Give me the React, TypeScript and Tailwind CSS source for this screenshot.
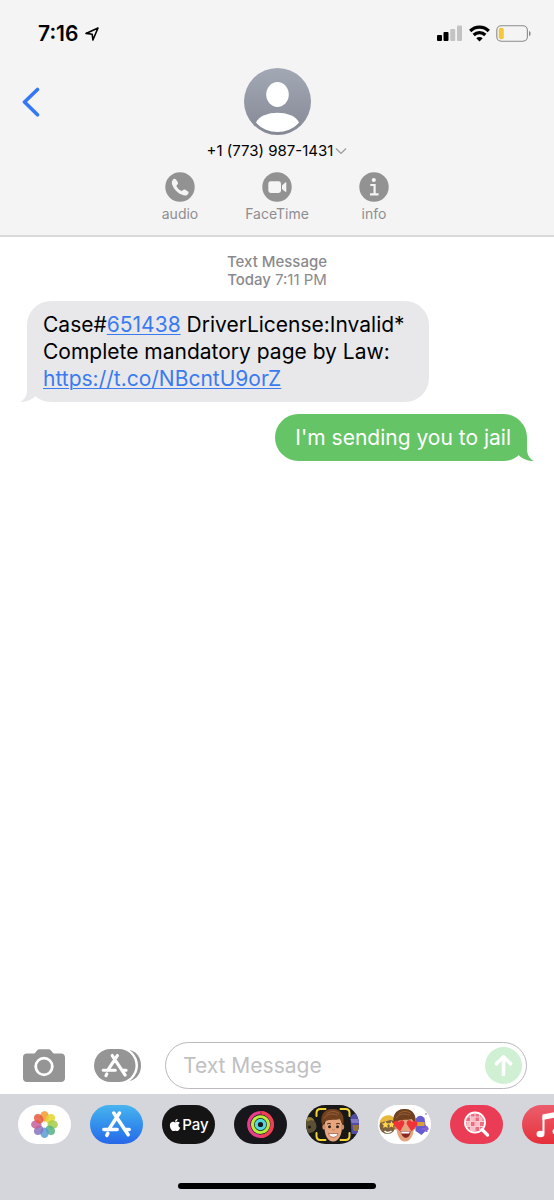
import type { ReactNode } from 'react'
import { FaApple } from 'react-icons/fa'

const petals = [
  { angle: 0, color: '#f39a2d' },
  { angle: 45, color: '#e3d52f' },
  { angle: 90, color: '#a5cc4a' },
  { angle: 135, color: '#55b184' },
  { angle: 180, color: '#5b9bd5' },
  { angle: 225, color: '#8274bd' },
  { angle: 270, color: '#c4629a' },
  { angle: 315, color: '#e8583f' },
]

function StatusBar() {
  return (
    <div className="flex h-17 items-center justify-between pr-[22px] pb-px pl-[38px]">
      <div className="flex items-center gap-[7px]">
        <span className="text-[21px] leading-6 font-semibold">7:16</span>
        <svg width="14" height="14" viewBox="0 0 14 14" fill="none" stroke="#000" strokeWidth="1.6" strokeLinejoin="round">
          <path d="M1 6.4 13 1 7.9 13 7.2 7.2Z" />
        </svg>
      </div>

      <div className="flex items-center gap-1.5">
        <svg width="26" height="17" viewBox="0 0 26 17">
          <rect x="0" y="10" width="5" height="6" rx="1" />
          <rect x="6.5" y="7" width="5" height="9" rx="1" />
          <rect x="13.2" y="4" width="5" height="12" rx="1" fill="#c3c3c4" />
          <rect x="20" y="0.5" width="5" height="15.5" rx="1" fill="#c3c3c4" />
        </svg>
        <svg width="21" height="17" viewBox="0 0 21 17" fill="none" stroke="#000" strokeWidth="3.2">
          <path d="M1.2 6a13.2 13.2 0 0 1 18.6 0" />
          <path d="M4.7 10a8.2 8.2 0 0 1 11.6 0" />
          <path d="M7.3 13.3a4.5 4.5 0 0 1 6.4 0L10.5 16.5Z" fill="#000" stroke="none" />
        </svg>
        <svg width="36" height="17" viewBox="0 0 36 17">
          <rect x="0.8" y="0.8" width="30.6" height="15.4" rx="4.4" fill="none" stroke="#8b8b8d" strokeWidth="1.1" />
          <rect x="2.8" y="2.8" width="5" height="11.4" rx="2" fill="#f5c83b" />
          <path d="M33 6v5.2c2.2-.8 2.2-4.4 0-5.2Z" fill="#8b8b8d" />
        </svg>
      </div>
    </div>
  )
}

function Action({ label, children }: { label: string; children: ReactNode }) {
  return (
    <button type="button" className="flex w-[97px] flex-col items-center gap-0.5 text-[#8e8e90]">
      <svg width="30" height="30" viewBox="0 0 30 30">
        <circle cx="15" cy="15" r="14.7" fill="#929293" />
        {children}
      </svg>
      <span className="text-[14px] leading-5">{label}</span>
    </button>
  )
}

function Header() {
  return (
    <header className="border-b-2 border-[#d9d9db] bg-[#f4f4f5] pb-[11px]">
      <StatusBar />
      <div className="grid grid-cols-[1fr_auto_1fr] items-center">
        <button type="button" aria-label="Back" className="w-fit pl-[22px]">
          <svg width="18" height="30" viewBox="0 0 18 30" fill="none" stroke="#3478f6" strokeWidth="3.6" strokeLinecap="round" strokeLinejoin="round">
            <path d="M15.5 2.5 2.5 15 15.5 27.8" />
          </svg>
        </button>
        <svg width="67" height="67" viewBox="0 0 67 67">
          <defs>
            <linearGradient id="avatar" x1="0" y1="0" x2="0" y2="1">
              <stop offset="0" stopColor="#a3a8b6" />
              <stop offset="1" stopColor="#858994" />
            </linearGradient>
            <clipPath id="avatar-clip">
              <circle cx="33.5" cy="33.5" r="30.5" />
            </clipPath>
          </defs>
          <circle cx="33.5" cy="33.5" r="33.5" fill="url(#avatar)" />
          <ellipse cx="33.5" cy="26.5" rx="11.3" ry="12.5" fill="#fff" />
          <path d="M12 54.5C15 48 24 44.7 33.5 44.7S52 48 55 54.5C50 62 42 64.5 33.5 64.5S17 62 12 54.5Z" fill="#fff" clipPath="url(#avatar-clip)" />
        </svg>
      </div>

      <button type="button" className="mx-auto mt-1.5 flex items-center gap-0.5 text-[15px] leading-5">
        +1 (773) 987-1431
        <svg width="12" height="8" viewBox="0 0 12 8" fill="none" stroke="#9a9a9e" strokeWidth="1.2" strokeLinecap="round">
          <path d="m1.2 1.8 4.8 4.6 4.8-4.6" />
        </svg>
      </button>

      <div className="mt-[11px] flex justify-center">
        <Action label="audio">
          <path
            d="M8.3 7.2c1-.8 2-.6 2.7.4l1.7 2.5c.6.9.5 1.6-.2 2.3l-.8.9c-.3.4-.3.7-.1 1.1 1 1.9 2.5 3.4 4.4 4.4.4.2.8.2 1.1-.1l1-.8c.7-.6 1.4-.7 2.2-.2l2.4 1.6c1 .7 1.2 1.6.4 2.6-1.3 1.7-3.3 2-5.4 1.2-5-1.9-8.700-5.600-10.500-10.400-.8-2.200-.4-4.100 1.100-5.500Z"
            fill="#f4f4f5"
          />
        </Action>
        <Action label="FaceTime">
          <rect x="6.3" y="9.3" width="12.7" height="11.7" rx="2.4" fill="#f4f4f5" />
          <path d="m20 13.4 3.3-2.9c.5-.4 1-.2 1 .5v8.2c0 .7-.5.9-1 .5L20 16.9Z" fill="#f4f4f5" />
        </Action>
        <Action label="info">
          <circle cx="14.8" cy="8" r="2.1" fill="#f4f4f5" />
          <path d="M11.3 13h4.3v9M11 22.3h8.6" fill="none" stroke="#f4f4f5" strokeWidth="2.2" />
        </Action>
      </div>
    </header>
  )
}

function Messages() {
  return (
    <main className="flex flex-1 flex-col px-[27px] pt-4">
      <p className="text-center text-[15px] leading-[18px] font-medium text-[#8a8a8e]">
        Text Message
        <br />
        Today <span className="font-normal">7:11 PM</span>
      </p>

      <div className="relative mt-3 max-w-[84%] self-start rounded-3xl bg-[#e8e8ea] py-2.5 pr-6 pl-4 text-[21px] leading-[27px]">
        <p>
          Case#
          <a href="#case" className="text-[#3a7bf0] underline decoration-1 underline-offset-2">
            651438
          </a>{' '}
          DriverLicense:Invalid*
        </p>
        <p>Complete mandatory page by Law:</p>
        <a href="#link" className="block w-fit text-[#3a7bf0] underline decoration-1 underline-offset-2">
          https://t.co/NBcntU9orZ
        </a>
        <svg className="absolute bottom-0 -left-[7px]" width="24" height="24" viewBox="0 0 24 24">
          <path d="M7 0V12C7 17.5 4.5 22 0 24 6 24 11.5 22 15 18.5L20 12Z" fill="#e8e8ea" />
        </svg>
      </div>

      <div className="relative mt-3 self-end rounded-3xl bg-[#65c466] py-2.5 pr-4 pl-5 text-[21px] leading-[27px] text-white">
        <p>I'm sending you to jail</p>
        <svg className="absolute -right-[7px] bottom-0" width="24" height="24" viewBox="0 0 24 24">
          <path d="M17 0V12C17 17.5 19.5 22 24 24 18 24 12.5 22 9 18.5L4 12Z" fill="#65c466" />
        </svg>
      </div>
    </main>
  )
}

function StoreGlyph() {
  return (
    <path
      d="M16.5.8 5.8 17.2M10.8.8 25.2 22.5M.8 17.2h13.4M21.5 17.2h4.7M4.8 21.2l-1 2"
      stroke="#fff"
      strokeWidth="3.5"
      strokeLinecap="round"
      fill="none"
    />
  )
}

function Composer() {
  return (
    <form className="flex items-center py-[5px] pr-[27px] pl-[23px]" onSubmit={(e) => e.preventDefault()}>
      <button type="button" aria-label="Camera">
        <svg width="42" height="33" viewBox="0 0 42 33">
          <path d="M4 4.6h7.5L14.3 1.3C15 .5 15.7.2 16.7.2h8.6c1 0 1.7.3 2.4 1.1l2.8 3.300H38c2.500 0 4 1.500 4 4V29c0 2.500-1.500 4-4 4H4c-2.500 0-4-1.500-4-4V8.600c0-2.500 1.500-4 4-4Z" fill="#959596" />
          <circle cx="21" cy="17.5" r="8.3" fill="none" stroke="#fff" strokeWidth="2.8" />
        </svg>
      </button>
      <button type="button" aria-label="Apps" className="ml-[29px]">
        <svg width="47" height="33" viewBox="0 0 47 33">
          <path d="M36 1C43 3 47 9 47 16.5S43 30 36 32Z" fill="#959596" />
          <rect x="-2" y="-2" width="46" height="37" rx="18.5" fill="#fff" />
          <rect width="41.5" height="33" rx="16.5" fill="#959596" />
          <g transform="translate(8.5 5.8) scale(.9)">
            <StoreGlyph />
          </g>
        </svg>
      </button>
      <div className="ml-6 flex h-[47px] min-w-0 flex-1 items-center rounded-full border border-[#b9b9bd] pr-1 pl-[17px]">
        <input
          type="text"
          aria-label="Message"
          placeholder="Text Message"
          className="min-w-0 flex-1 bg-transparent text-[21px] leading-[27px] outline-none placeholder:text-[#c0c0c3]"
        />
        <button type="submit" aria-label="Send">
          <svg width="37" height="37" viewBox="0 0 37 37">
            <circle cx="18.5" cy="18.5" r="18.5" fill="#d0f0d3" />
            <path d="M18.5 27.5V10.5M11.5 16.8l7-7 7 7" fill="none" stroke="#fff" strokeWidth="3.5" strokeLinecap="round" strokeLinejoin="round" />
          </svg>
        </button>
      </div>
    </form>
  )
}

function Face() {
  return (
    <>
      <path d="M18 19C17.5 29 20.5 36.5 26.5 36.5S36 29 35.5 19L33 11H21Z" fill="#e5a67f" />
      <ellipse cx="17.5" cy="22" rx="1.7" ry="2.8" fill="#d08d66" />
      <ellipse cx="36" cy="22" rx="1.7" ry="2.8" fill="#d08d66" />
      <path d="M16 20.5C12.5 12 17 3.5 26 4c8.5-.5 13 6.5 10.5 16.5-.8-3-2-5-3.500-6.500-4.500 1.500-10 0-13.500 2-1.500 1-2.500 2.500-3.500 4.500Z" fill="#70401f" />
      <path d="M17.5 13.5C20 9 25 8 31 10M20 9C23.5 6 28 5.5 32.5 8.5" fill="none" stroke="#99613a" strokeWidth="1" />
    </>
  )
}

function AppPill({ label, tone, children }: { label: string; tone: string; children: ReactNode }) {
  return (
    <button type="button" aria-label={label} className={`h-[39px] w-[53px] shrink-0 overflow-hidden rounded-full ${tone}`}>
      <svg className="size-full" viewBox="0 0 52 39">
        {children}
      </svg>
    </button>
  )
}

function AppStrip() {
  return (
    <footer className="overflow-hidden bg-[#d5d6dc] py-[11px]">
      <nav className="flex gap-[19px] pl-[18px]">
        <AppPill label="Photos" tone="bg-white">
          {petals.map((p) => (
            <ellipse
              key={p.angle}
              cx="26"
              cy="11.3"
              rx="4.3"
              ry="5.2"
              fill={p.color}
              fillOpacity="0.85"
              transform={`rotate(${p.angle} 26 19.5)`}
            />
          ))}
          <circle cx="26" cy="19.5" r="1.2" fill="#fff" />
        </AppPill>
        <AppPill label="App Store" tone="bg-linear-to-b from-[#48b4ee] to-[#2867e9]">
          <g transform="translate(12.5 7.2)">
            <StoreGlyph />
          </g>
        </AppPill>
        <button type="button" className="flex h-[39px] w-[53px] shrink-0 items-center justify-center rounded-full bg-[#151414] text-white">
          <FaApple className="size-3.5" />
          <span className="text-[15px] leading-5 font-medium">Pay</span>
        </button>
        <AppPill label="Fitness" tone="bg-[#17161b]">
          <g fill="none" strokeWidth="3.2">
            <circle cx="26" cy="19.5" r="11.8" stroke="#e93c8d" />
            <path d="M26 7.7a11.8 11.8 0 0 1 0 23.6" stroke="#ee4050" />
            <circle cx="26" cy="19.5" r="8" stroke="#b5ed3d" />
            <circle cx="26" cy="19.5" r="4.2" stroke="#55d5e0" />
            <path d="M26.5 6v4.5" stroke="#8f2634" strokeWidth="1" />
          </g>
        </AppPill>
        <AppPill label="Memoji" tone="bg-[#191818]">
          <circle cx="3" cy="21" r="7" fill="#5c5034" />
          <path d="M-3 17C0 10 6 11 8 16l-3-1Z" fill="#94803a" />
          <circle cx="3" cy="22" r="1.5" fill="#201c12" />
          <path d="M44 12c2-4 8-5 12-3v20H45Z" fill="#504ba5" />
          <path d="M44 14h10v4H45Z" fill="#8078c4" />
          <path d="M46 20h8v6h-7Z" fill="#967039" />
          <Face />
          <path d="M20.5 19q2-1.3 4 0M29.5 19q2-1.3 4 0" stroke="#5f351e" strokeWidth="1" fill="none" />
          <circle cx="23" cy="21.8" r="1.5" fill="#34251d" />
          <circle cx="31" cy="21.8" r="1.5" fill="#34251d" />
          <path d="M26 24.5q1 1.5 2 0" stroke="#b86f4c" fill="none" />
          <path d="M22 28.5h9.5C30.5 33.5 23.5 33.5 22 28.5Z" fill="#fff" stroke="#8e3d2c" strokeWidth=".6" />
          <path d="M10 11V8q0-4 4-4h5M34 4h5q4 0 4 4v3M10 28v3q0 4 4 4h5M43 28v3q0 4-4 4h-5" fill="none" stroke="#f3d634" strokeWidth="2" strokeLinecap="round" />
        </AppPill>
        <AppPill label="Memoji Stickers" tone="bg-white">
          <circle cx="9" cy="21" r="8" fill="#80613d" />
          <path d="M1 18C2 9 15 7 17 16l-5-1Z" fill="#e7b83c" />
          <path d="m7 16 1.2 2.3 2.5.3-1.9 1.7.5 2.6L7 21.7l-2.3 1.2.5-2.6-1.9-1.7 2.5-.3Z" fill="#ffd64d" />
          <path d="m13 16 1 2.3 2.4.3-1.8 1.7.4 2.5-2-1.2-2.2 1.2.4-2.5-1.8-1.7 2.5-.3Z" fill="#ffd64d" />
          <path d="M6 26q3 3 7 0" stroke="#fff" strokeWidth="1.5" fill="none" />
          <path d="M37 14q4-6 9-1l1 7 3 3-4 4-3 3-6-4Z" fill="#675bd0" />
          <path d="M38 17h8v4h-8Z" fill="#d89e39" />
          <path d="M43 24h7M48 21v6M47 9h1" stroke="#8562d9" strokeWidth="2" />
          <Face />
          <path d="M22 26h10c0 8-8 10-10 0Z" fill="#8b2926" />
          <path d="M22.5 26.5h9l-1 2h-7.5Z" fill="#fff" />
          <path d="m21.5 26.5-5.5-6c-2.5-4 2-6.5 4.5-3.5 2-3.5 6.5-1.5 5 2.5Z" fill="#ef3439" />
          <path d="m33 26.5 5.5-6c2-4-2-6.5-5-3.5-2-3.5-6.5-1-5 2.5Z" fill="#ef3439" />
        </AppPill>
        <AppPill label="Images" tone="bg-[#eb3c56]">
          <circle cx="24.5" cy="17.5" r="9" fill="#ee6c80" />
          <path d="M20 12h4v4h-4ZM25 17h4v4h-4ZM29 12.5h3v4h-3ZM16 17h4v4h-4ZM20.5 22h4v4h-4Z" fill="#f9bdc5" />
          <path d="M15.5 16.5h18M15.5 21.5h18M20 10v15M24.5 8v18M29 10v15M17 12h15" stroke="#fbd3d9" strokeWidth=".9" />
          <circle cx="24.5" cy="17.5" r="10" fill="none" stroke="#fff" strokeWidth="1.9" />
          <path d="m31.5 24.5 5.500 5.500" stroke="#fff" strokeWidth="3.2" strokeLinecap="round" />
        </AppPill>
        <AppPill label="Music" tone="bg-linear-to-b from-[#ec5c6c] to-[#e52e39]">
          <path d="M21 28V11.5L37 8v17.5" fill="none" stroke="#fff" strokeWidth="2" />
          <path d="M20 9.5 38 6v5.5L20 15Z" fill="#fff" />
          <ellipse cx="18" cy="29" rx="4" ry="3.2" fill="#fff" />
          <ellipse cx="34" cy="26.5" rx="4" ry="3.2" fill="#fff" />
        </AppPill>
      </nav>
      <div className="mx-auto mt-[39px] h-1.5 w-[198px] rounded-full bg-black" />
    </footer>
  )
}

export default function App() {
  return (
    <div className="flex min-h-screen flex-col bg-white font-[Inter,'Liberation_Sans',sans-serif] text-black">
      <Header />
      <Messages />
      <Composer />
      <AppStrip />
    </div>
  )
}
